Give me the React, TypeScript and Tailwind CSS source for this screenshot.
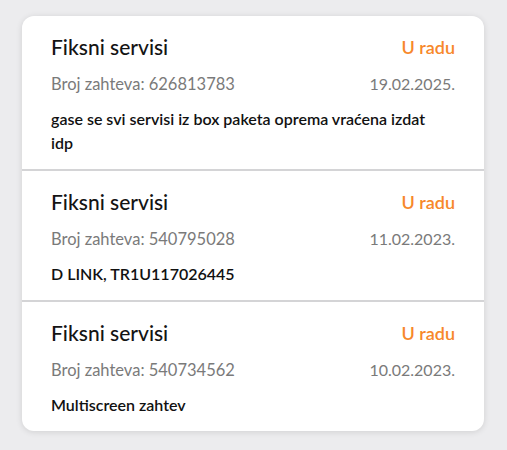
const requests = [
  {
    id: "626813783",
    date: "19.02.2025.",
    note: "gase se svi servisi iz box paketa oprema vraćena izdat idp",
  },
  { id: "540795028", date: "11.02.2023.", note: "D LINK, TR1U117026445" },
  { id: "540734562", date: "10.02.2023.", note: "Multiscreen zahtev" },
];

export default function App() {
  return (
    <div
      className="min-h-[450px] w-full bg-[#ececee] px-[22px] pt-4"
      style={{ fontFamily: "Lato, 'Noto Sans', sans-serif" }}
    >
      <div className="w-[462px] overflow-hidden rounded-xl bg-white shadow-[0_1px_6px_rgba(0,0,0,0.12)]">
        {requests.map((r, i) => (
          <div
            key={r.id}
            className={
              "px-[29px] pt-[17px] pb-[14px] " +
              (i > 0 ? "border-t-2 border-[#d4d4d6]" : "")
            }
          >
            <div className="flex h-7 items-center justify-between">
              <span className="text-[21px] font-medium text-[#141414]">Fiksni servisi</span>
              <span className="text-[18px] font-semibold text-[#f7882b]">U radu</span>
            </div>
            <div className="mt-[11px] flex items-center justify-between text-[16.5px] leading-6 text-[#7a7a7a]">
              <span>Broj zahteva: {r.id}</span>
              <span className="text-[16px]">{r.date}</span>
            </div>
            <p className="mt-[11px] pr-2 text-[16px] font-semibold leading-6 text-[#111]">{r.note}</p>
          </div>
        ))}
      </div>
    </div>
  );
}
